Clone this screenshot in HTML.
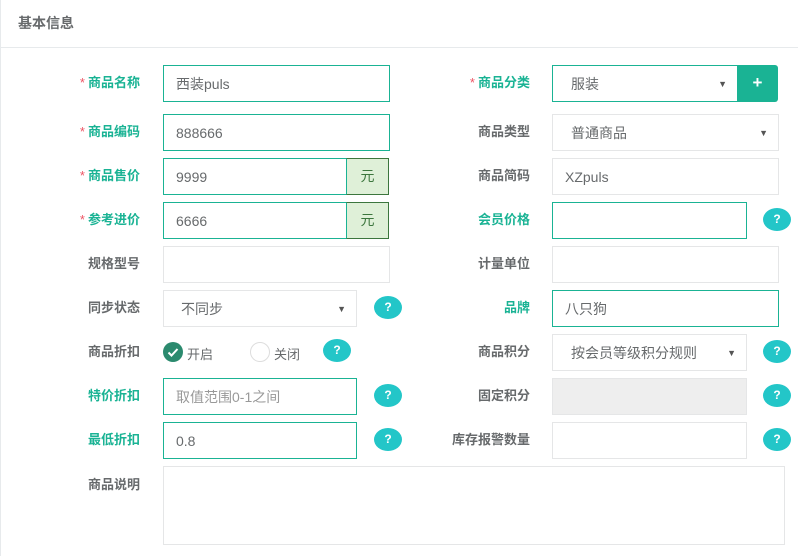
<!DOCTYPE html>
<html><head><meta charset="utf-8"><style>
*{box-sizing:border-box;margin:0;padding:0}
body{width:798px;height:556px;background:#fff;font-family:"Liberation Sans","Noto Sans CJK SC",sans-serif;position:relative;overflow:hidden;color:#676a6c}
.frame{position:absolute;left:0;top:0;width:798px;height:556px;border-left:1px solid #e7eaec}
.hd{position:absolute;left:1px;top:0;right:0;height:48px;border-bottom:1px solid #e7eaec}
.hd span{position:absolute;left:17px;top:13px;font-size:14px;font-weight:bold;color:#676a6c}
.lb{position:absolute;font-size:13px;font-weight:bold;color:#676a6c;text-align:right;width:140px;margin-top:-2px}
.g{color:#1ab394}
.lb i{color:#ed5565;font-style:normal;font-weight:normal;margin-right:3px}
.in{position:absolute;border:1px solid #e5e6e7;height:37px;font-size:14px;color:#676a6c;padding:0 12px;line-height:37px;background:#fff}
.in.a{border-color:#1ab394}
.ph{color:#999}
.ad{position:absolute;background:#dff0d8;border:1px solid #3c763d;border-left:1px solid #1ab394;color:#3c763d;font-size:14px;text-align:center;line-height:35px;height:37px}
.ar{position:absolute;right:10px;top:0;font-size:9px;color:#555}
.q{position:absolute;width:28px;height:23px;border-radius:50%;background:#23c6c8;color:#fff;font-size:12px;font-weight:bold;text-align:center;line-height:23px}
</style></head><body><div class="frame"></div>
<div class="hd"><span>基本信息</span></div>

<div class="lb g" style="left:0;top:74px"><i>*</i>商品名称</div>
<div class="in a" style="left:163px;top:65px;width:227px">西装puls</div>
<div class="lb g" style="left:0;top:123px"><i>*</i>商品编码</div>
<div class="in a" style="left:163px;top:114px;width:227px">888666</div>
<div class="lb g" style="left:0;top:167px"><i>*</i>商品售价</div>
<div class="in a" style="left:163px;top:158px;width:184px">9999</div>
<div class="ad" style="left:346px;top:158px;width:43px">元</div>
<div class="lb g" style="left:0;top:211px"><i>*</i>参考进价</div>
<div class="in a" style="left:163px;top:202px;width:184px">6666</div>
<div class="ad" style="left:346px;top:202px;width:43px">元</div>
<div class="lb" style="left:0;top:255px">规格型号</div>
<div class="in" style="left:163px;top:246px;width:227px"></div>
<div class="lb" style="left:0;top:299px">同步状态</div>
<div class="in" style="left:163px;top:290px;width:194px;padding-left:17px">不同步<span class="ar">▼</span></div>
<div class="q" style="left:374px;top:296px">?</div>
<div class="lb" style="left:0;top:343px">商品折扣</div>
<div style="position:absolute;left:163px;top:342px;width:20px;height:20px;border-radius:50%;background:#2b8a6e"><svg width="20" height="20"><path d="M5.5 10.5 L8.5 13.5 L14.5 7" stroke="#fff" stroke-width="2" fill="none"/></svg></div>
<div style="position:absolute;left:187px;top:344px;font-size:13px">开启</div>
<div style="position:absolute;left:250px;top:342px;width:20px;height:20px;border-radius:50%;border:1px solid #ddd"></div>
<div style="position:absolute;left:274px;top:344px;font-size:13px">关闭</div>
<div class="q" style="left:323px;top:339px">?</div>
<div class="lb g" style="left:0;top:387px">特价折扣</div>
<div class="in a" style="left:163px;top:378px;width:194px"><span class="ph">取值范围0-1之间</span></div>
<div class="q" style="left:374px;top:384px">?</div>
<div class="lb g" style="left:0;top:431px">最低折扣</div>
<div class="in a" style="left:163px;top:422px;width:194px">0.8</div>
<div class="q" style="left:374px;top:428px">?</div>
<div class="lb" style="left:0;top:476px">商品说明</div>
<div class="in" style="left:163px;top:466px;width:622px;height:79px"></div>

<div class="lb g" style="left:390px;top:74px"><i>*</i>商品分类</div>
<div class="in a" style="left:552px;top:65px;width:186px;padding-left:18px">服装<span class="ar">▼</span></div>
<div style="position:absolute;left:737px;top:65px;width:41px;height:37px;background:#1ab394;border-radius:0 3px 3px 0;color:#fff;font-size:17px;font-weight:bold;text-align:center;line-height:36px">+</div>
<div class="lb" style="left:390px;top:123px">商品类型</div>
<div class="in" style="left:552px;top:114px;width:227px;padding-left:18px">普通商品<span class="ar">▼</span></div>
<div class="lb" style="left:390px;top:167px">商品简码</div>
<div class="in" style="left:552px;top:158px;width:227px">XZpuls</div>
<div class="lb g" style="left:390px;top:211px">会员价格</div>
<div class="in a" style="left:552px;top:202px;width:195px"></div>
<div class="q" style="left:763px;top:208px">?</div>
<div class="lb" style="left:390px;top:255px">计量单位</div>
<div class="in" style="left:552px;top:246px;width:227px"></div>
<div class="lb g" style="left:390px;top:299px">品牌</div>
<div class="in a" style="left:552px;top:290px;width:227px">八只狗</div>
<div class="lb" style="left:390px;top:343px">商品积分</div>
<div class="in" style="left:552px;top:334px;width:195px;padding-left:18px">按会员等级积分规则<span class="ar">▼</span></div>
<div class="q" style="left:763px;top:340px">?</div>
<div class="lb" style="left:390px;top:387px">固定积分</div>
<div class="in" style="left:552px;top:378px;width:195px;background:#eee"></div>
<div class="q" style="left:763px;top:384px">?</div>
<div class="lb" style="left:390px;top:431px">库存报警数量</div>
<div class="in" style="left:552px;top:422px;width:195px"></div>
<div class="q" style="left:763px;top:428px">?</div>
</body></html>
